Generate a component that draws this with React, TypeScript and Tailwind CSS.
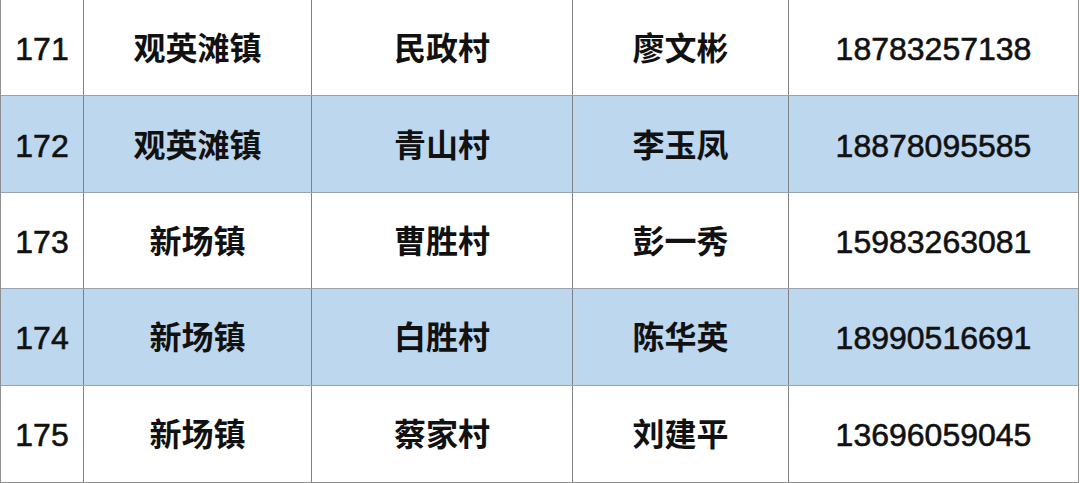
const rows = [
    { no: "171", town: "观英滩镇", village: "民政村", name: "廖文彬", phone: "18783257138" },
    { no: "172", town: "观英滩镇", village: "青山村", name: "李玉凤", phone: "18878095585" },
    { no: "173", town: "新场镇", village: "曹胜村", name: "彭一秀", phone: "15983263081" },
    { no: "174", town: "新场镇", village: "白胜村", name: "陈华英", phone: "18990516691" },
    { no: "175", town: "新场镇", village: "蔡家村", name: "刘建平", phone: "13696059045" },
];

export default function App() {
    return (
        <div className="w-[1080px] h-[483px] bg-white overflow-hidden">
            <div
                className="w-[1079px] h-[483px] grid grid-rows-5 border-l border-r border-b border-[#8f8f8f] text-[#111] text-[32px] leading-none"
                style={{ fontFamily: '"Liberation Sans", "Noto Sans CJK SC", sans-serif' }}
            >
                {rows.map((r, i) => {
                    const blue = i % 2 === 1;
                    return (
                        <div
                            key={r.no}
                            className={`grid grid-cols-[83px_228px_261px_216px_1fr] ${
                                i < rows.length - 1 ? "border-b border-[#9aa3ab]" : ""
                            } ${blue ? "bg-[#bdd7ee]" : "bg-white"}`}
                        >
                            {/* digits look a touch heavier than regular in the source */}
                            <div className="flex items-center justify-center pt-[3px] border-r border-[#7d8287] [-webkit-text-stroke:0.6px_#111]">{r.no}</div>
                            <div className="flex items-center justify-center pt-[3px] border-r border-[#7d8287] font-bold">{r.town}</div>
                            <div className="flex items-center justify-center pt-[3px] border-r border-[#7d8287] font-bold">{r.village}</div>
                            <div className="flex items-center justify-center pt-[3px] border-r border-[#7d8287] font-bold">{r.name}</div>
                            <div className="flex items-center justify-center pt-[3px] [-webkit-text-stroke:0.6px_#111]">{r.phone}</div>
                        </div>
                    );
                })}
            </div>
        </div>
    );
}
